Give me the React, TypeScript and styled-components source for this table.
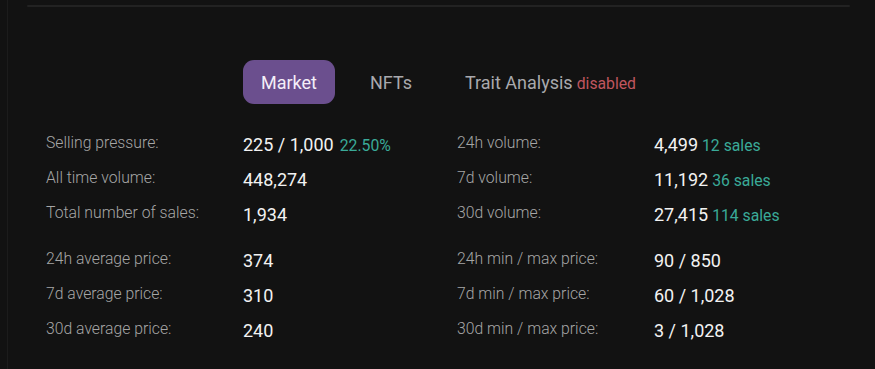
import * as React from 'react';
import styled, { createGlobalStyle } from 'styled-components';

const GlobalStyle = createGlobalStyle`
  html, body {
    margin: 0;
    padding: 0;
    background: #121212;
    font-family: Roboto, "Liberation Sans", sans-serif;
  }
`;

interface StatI {
  label: string;
  value: string;
  extra?: string;
}

const leftGroups: StatI[][] = [
  [
    { label: 'Selling pressure:', value: '225 / 1,000', extra: '22.50%' },
    { label: 'All time volume:', value: '448,274' },
    { label: 'Total number of sales:', value: '1,934' },
  ],
  [
    { label: '24h average price:', value: '374' },
    { label: '7d average price:', value: '310' },
    { label: '30d average price:', value: '240' },
  ],
];

const rightGroups: StatI[][] = [
  [
    { label: '24h volume:', value: '4,499', extra: '12 sales' },
    { label: '7d volume:', value: '11,192', extra: '36 sales' },
    { label: '30d volume:', value: '27,415', extra: '114 sales' },
  ],
  [
    { label: '24h min / max price:', value: '90 / 850' },
    { label: '7d min / max price:', value: '60 / 1,028' },
    { label: '30d min / max price:', value: '3 / 1,028' },
  ],
];

const Frame = styled.div`
  height: 369px;
  box-sizing: border-box;
  margin-left: 7px;
  border-left: 1px solid #1c1c1c;
  padding: 5px 25px 0 19px;
  overflow: hidden;
`;

const Divider = styled.div`
  height: 2px;
  background: #222222;
  border-radius: 1px;
`;

const Tabs = styled.div`
  display: flex;
  align-items: center;
  gap: 17px;
  margin-top: 53px;
  padding-left: 216px;
`;

interface TabI {
  active?: boolean;
}

const Tab = styled.div<TabI>`
  display: flex;
  align-items: center;
  height: 44px;
  padding: 0 18px;
  border-radius: 11px;
  font-size: 18px;
  color: ${({ active }) => (active ? '#f4eef8' : '#a9a9ad')};
  background: ${({ active }) => (active ? '#6b4f8e' : 'transparent')};
`;

const Disabled = styled.span`
  font-size: 15.75px;
  color: #c0565f;
  margin-left: 4px;
  margin-top: 2px;
`;

const Stats = styled.div`
  display: grid;
  grid-template-columns: 411px 1fr;
  margin-top: 23px;
  padding-left: 19px;
`;

const Column = styled.div`
  display: flex;
  flex-direction: column;
  gap: 11px;
`;

const Group = styled.div`
  display: flex;
  flex-direction: column;
`;

const Row = styled.div`
  display: grid;
  grid-template-columns: 197px 1fr;
  align-items: center;
  height: 35px;
`;

const Label = styled.span`
  font-size: 15.75px;
  font-weight: 300;
  color: #a6a6a6;
  margin-top: -4px;
`;

const Value = styled.span`
  font-size: 18px;
  color: #f2f2f2;
`;

interface ExtraI {
  wide?: boolean;
}

const Extra = styled.span<ExtraI>`
  font-size: 15.75px;
  color: #3aaa98;
  margin-left: ${({ wide }) => (wide ? '6px' : '4px')};
`;

const StatColumn = ({ groups }: { groups: StatI[][] }) => (
  <Column>
    {groups.map((group, i) => (
      <Group key={i}>
        {group.map((stat) => (
          <Row key={stat.label}>
            <Label>{stat.label}</Label>
            <Value>
              {stat.value}
              {stat.extra && (
                <Extra wide={stat.extra.includes('%')}>
                  {stat.extra}
                </Extra>
              )}
            </Value>
          </Row>
        ))}
      </Group>
    ))}
  </Column>
);

const App = () => (
  <>
    <GlobalStyle />
    <Frame>
      <Divider />
      <Tabs>
        <Tab active>Market</Tab>
        <Tab>NFTs</Tab>
        <Tab>
          Trait Analysis
          <Disabled>disabled</Disabled>
        </Tab>
      </Tabs>
      <Stats>
        <StatColumn groups={leftGroups} />
        <StatColumn groups={rightGroups} />
      </Stats>
    </Frame>
  </>
);

export default App;
